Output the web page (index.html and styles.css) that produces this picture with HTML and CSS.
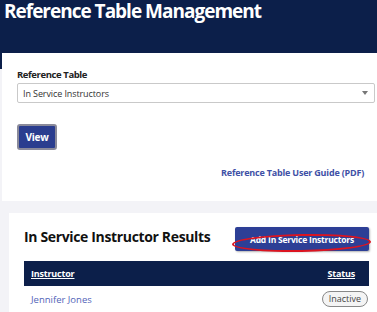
FILE: index.html
```html
<!DOCTYPE html>
<html>
<head>
<meta charset="utf-8">
<link rel="stylesheet" href="styles.css">
</head>
<body>
<header class="banner">
  <h1 class="banner-title">Reference Table Management</h1>
</header>
<main class="content">
  <section class="card card-select">
    <label class="field-label" for="reftable">Reference Table</label>
    <div class="select-box" id="reftable">
      <span class="select-value">In Service Instructors</span>
      <span class="select-arrow"></span>
    </div>
    <button class="btn btn-view">View</button>
    <div class="guide-row">
      <a class="guide-link" href="#">Reference Table User Guide (PDF)</a>
    </div>
  </section>
  <section class="card card-results">
    <div class="results-head">
      <h2 class="results-title">In Service Instructor Results</h2>
      <div class="add-wrap">
        <button class="btn btn-add">Add In Service Instructors</button>
        <span class="ring"></span>
      </div>
    </div>
    <table class="results-table">
      <thead>
        <tr><th class="col-name"><a href="#">Instructor</a></th><th class="col-status"><a href="#">Status</a></th></tr>
      </thead>
      <tbody>
        <tr><td class="col-name"><a class="name-link" href="#">Jennifer Jones</a></td><td class="col-status"><span class="pill">Inactive</span></td></tr>
      </tbody>
    </table>
  </section>
</main>
</body>
</html>
```
FILE: styles.css
```css
html, body {
  margin: 0;
  padding: 0;
}
body {
  background: #f3f3f7;
  font-family: "Open Sans", "Noto Sans", "Liberation Sans", sans-serif;
  width: 377px;
  height: 312px;
  overflow: hidden;
}
.banner {
  background: #0c1f4a;
  height: 69px;
  padding: 0 0 0 4px;
  box-sizing: border-box;
}
.banner-title {
  margin: 0;
  color: #ffffff;
  font-size: 19px;
  font-weight: 700;
  line-height: 23px;
  letter-spacing: -1px;
  white-space: nowrap;
}
.content {
  margin-top: -16px;
}
.card {
  background: #ffffff;
  box-sizing: border-box;
}
.card-select {
  margin-left: 2px;
  width: 420px;
  height: 148px;
  padding: 15px 0 0 15px;
  display: flex;
  flex-direction: column;
  align-items: flex-start;
}
.field-label {
  font-size: 9.5px;
  font-weight: 700;
  color: #222;
  line-height: 13px;
  letter-spacing: -0.4px;
  margin-bottom: 2px;
}
.select-box {
  width: 358px;
  height: 20px;
  box-sizing: border-box;
  border: 1px solid #c9c9c9;
  border-radius: 2px;
  display: flex;
  align-items: center;
  justify-content: space-between;
  padding: 0 6px 0 5px;
}
.select-value {
  font-size: 9px;
  color: #333;
  letter-spacing: -0.1px;
}
.select-arrow {
  width: 0;
  height: 0;
  border-left: 3.5px solid transparent;
  border-right: 3.5px solid transparent;
  border-top: 4px solid #777;
}
.btn {
  font-family: inherit;
  font-weight: 700;
  color: #fff;
  cursor: pointer;
}
.btn-view {
  margin-top: 21px;
  width: 40px;
  height: 26px;
  background: #2a3d8f;
  border: 2px solid #8a8a9a;
  border-radius: 3px;
  font-size: 10px;
  letter-spacing: -0.3px;
  padding: 0;
}
.guide-row {
  width: 347px;
  text-align: right;
  margin-top: 9px;
}
.guide-link {
  font-size: 9px;
  font-weight: 700;
  color: #3f51a6;
  letter-spacing: -0.2px;
  text-decoration: none;
}
.card-results {
  margin-top: 12px;
  margin-left: 9px;
  width: 420px;
  height: 120px;
  padding: 14px 0 0 15px;
}
.results-head {
  width: 345px;
  display: flex;
  justify-content: space-between;
  align-items: flex-start;
  height: 24px;
  margin-bottom: 10px;
}
.results-title {
  margin: 0;
  font-size: 14px;
  line-height: 19px;
  font-weight: 700;
  color: #111;
  letter-spacing: -0.35px;
}
.add-wrap {
  position: relative;
}
.btn-add {
  display: block;
  width: 134px;
  height: 24px;
  background: #2d3f96;
  border: none;
  border-radius: 2px;
  font-size: 8.5px;
  letter-spacing: -0.2px;
  padding: 0;
  box-shadow: 1px 1px 2px rgba(0,0,0,0.3);
}
.ring {
  position: absolute;
  left: -3px;
  top: 7px;
  width: 139px;
  height: 18px;
  border: 2px solid #dc1420;
  border-radius: 50%;
  box-sizing: border-box;
  transform: rotate(-1deg);
  pointer-events: none;
}
.results-table {
  width: 345px;
  border-collapse: collapse;
}
.results-table th {
  background: #0c1f4a;
  height: 25px;
  padding: 0 7px;
  font-size: 9px;
  font-weight: 700;
  letter-spacing: -0.2px;
}
.results-table th.col-status {
  padding-right: 14px;
}
.results-table th a {
  color: #fff;
  text-decoration: underline;
}
.col-name {
  text-align: left;
}
.col-status {
  text-align: right;
}
.results-table td {
  height: 26px;
  padding: 0 1px 0 7px;
  font-size: 9.5px;
}
.name-link {
  color: #5263b8;
  text-decoration: none;
}
.pill {
  display: inline-block;
  border: 1px solid #888;
  border-radius: 9px;
  padding: 1px 6px;
  font-size: 9px;
  color: #444;
  background: #f4f4f4;
  line-height: 12px;
}
```
